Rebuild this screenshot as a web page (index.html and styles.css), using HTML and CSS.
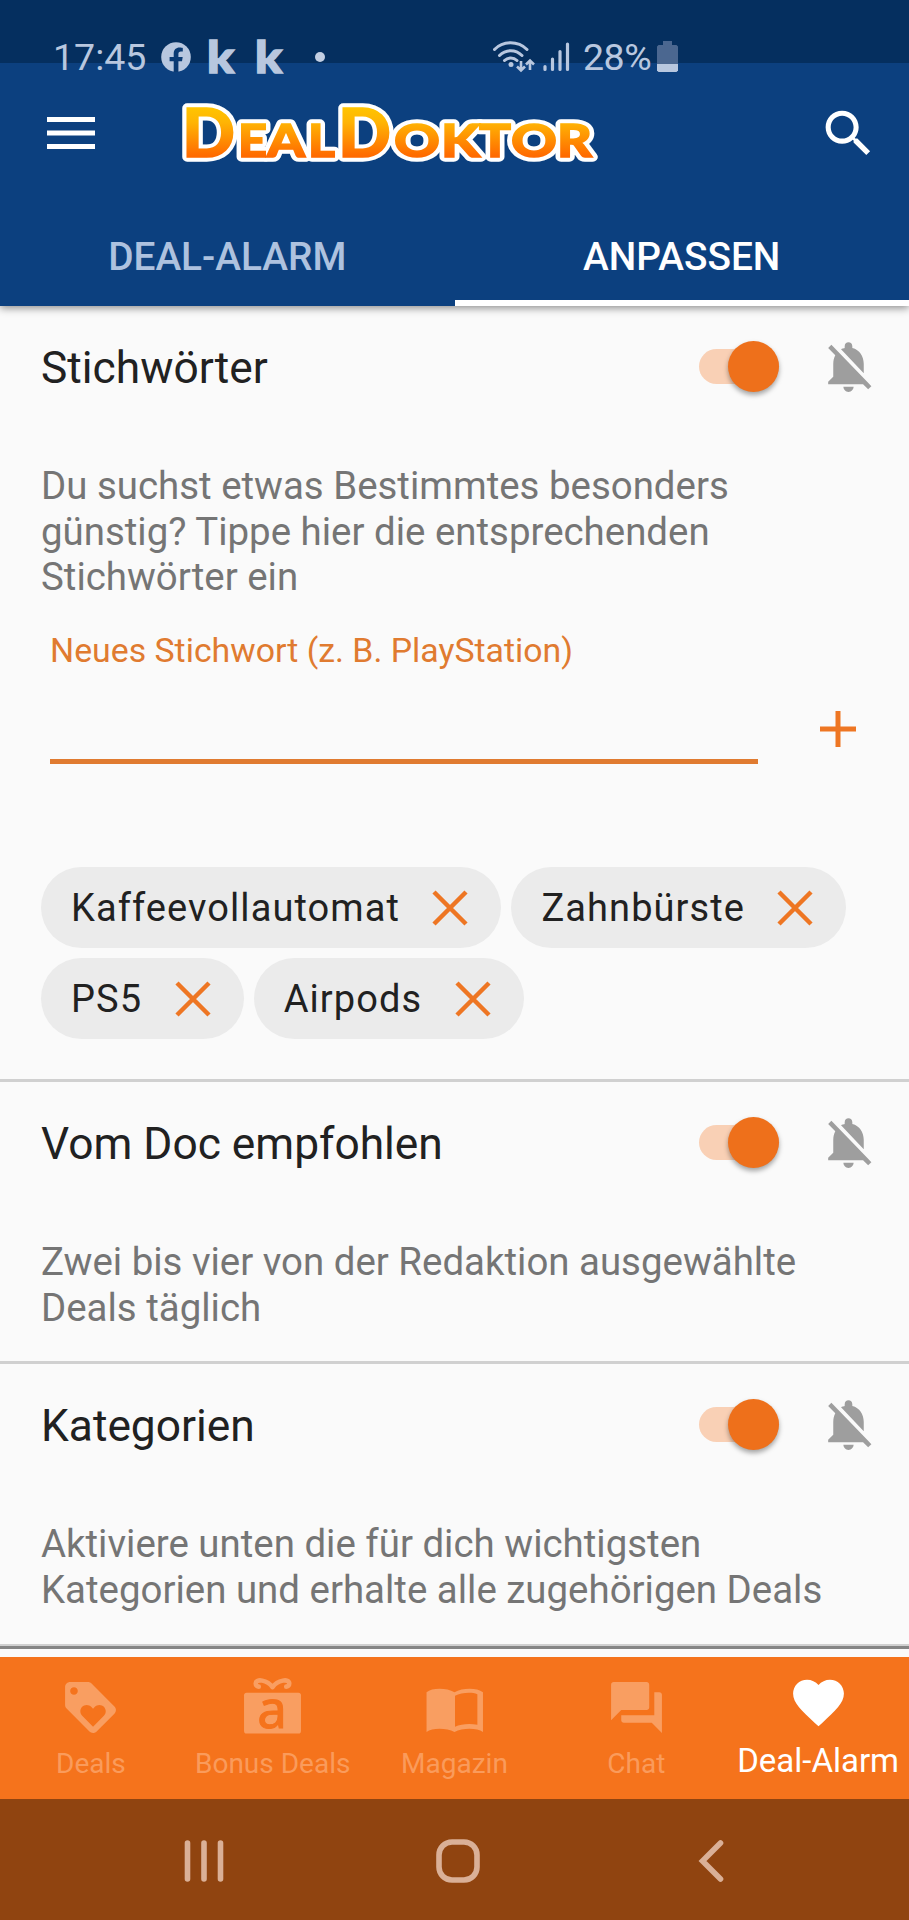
FILE: index.html
```html
<!DOCTYPE html>
<html lang="de">
<head>
<meta charset="utf-8">
<title>DealDoktor – Deal-Alarm</title>
<link rel="stylesheet" href="styles.css">
</head>
<body>
<svg class="defs" width="0" height="0" aria-hidden="true">
  <symbol id="bell-off" viewBox="0 0 24 24"><path d="M20 18.69L7.84 6.14 5.27 3.49 4 4.76l2.8 2.8v.01c-.52.99-.8 2.16-.8 3.42v5l-2 2v1h13.73l2 2L21 19.73l-1-1.04zM12 22c1.11 0 2-.89 2-2h-4c0 1.11.89 2 2 2zm6-7.32V11c0-3.08-1.64-5.64-4.5-6.32V4c0-.83-.67-1.5-1.5-1.5s-1.5.67-1.5 1.5v.68c-.15.03-.29.08-.42.12-.1.03-.2.07-.3.11h-.01c-.01 0-.01 0-.02.01-.23.09-.46.2-.68.31 0 0-.01 0-.01.01L18 14.68z"/></symbol>
  <symbol id="cross" viewBox="0 0 36 36"><path d="M2 2L34 34M34 2L2 34"/></symbol>
</svg>
<div class="screen">
  <header class="top">
    <div class="status">
      <span class="clock">17:45</span>
      <svg class="fb" viewBox="0 0 30 30"><circle cx="15" cy="15" r="14.8"/><path d="M12.7 30V19.2H8.6V15h4.1v-3.2c0-4 2.3-6.2 5.9-6.2 1.200 0 2.600.2 3.200.4v3.600h-1.900c-1.900 0-2.500 1.100-2.500 2.400V15h4.300l-.7 4.200h-3.600V30z"/></svg>
      <span class="k">k</span><span class="k k-second">k</span>
      <span class="dot"></span>
      <svg class="wifi" viewBox="0 0 42 32"><g fill="none" stroke-width="3"><path d="M1.500 8.500C10-.5 25-.5 34 8.500M6.500 14.500c6.500-6.500 16-6.500 22.500 0M11.500 19.500c3.500-3.500 9-3.500 12.500 0" stroke-linecap="round"/><path d="M28 20v9M24 25.500l4 4 4-4M37 29v-9M33 23.500l4-4 4 4" stroke-width="2.600"/></g><circle cx="18" cy="23.500" r="2.500"/></svg>
      <svg class="signal" viewBox="0 0 28 30"><path d="M2 27.500v-3M9.500 27.500V17M17 27.500V9.500M24.500 27.500V2" stroke-width="3.200" stroke-linecap="round"/></svg>
      <span class="percent">28%</span>
      <svg class="battery" viewBox="0 0 21 31"><path class="battery-shell" d="M6 0h9v4h4.500l1.500 1.500V23H0V5.500L1.500 4H6z"/><path d="M0 23h21v6.500L19.500 31h-18L0 29.500z"/></svg>
    </div>
    <div class="appbar">
      <svg class="menu" viewBox="0 0 48 32"><path d="M0 0h48v5H0zM0 13.500h48v5H0zM0 27h48v5H0z"/></svg>
      <svg class="logo" viewBox="0 0 420 66">
        <defs>
          <linearGradient id="gold" gradientUnits="userSpaceOnUse" x1="0" y1="8" x2="0" y2="56"><stop offset="0" stop-color="#ffc400"/><stop offset=".3" stop-color="#ffb404"/><stop offset="1" stop-color="#ff6a00"/></linearGradient>
          <g id="word">
            <text class="cap" x="1" y="57" textLength="53" lengthAdjust="spacingAndGlyphs">D</text>
            <text class="small" x="57" y="57" textLength="29" lengthAdjust="spacingAndGlyphs">E</text>
            <text class="small" x="86" y="57" textLength="38" lengthAdjust="spacingAndGlyphs">A</text>
            <text class="small" x="127" y="57" textLength="27" lengthAdjust="spacingAndGlyphs">L</text>
            <text class="cap" x="157" y="57" textLength="53" lengthAdjust="spacingAndGlyphs">D</text>
            <text class="small" x="213" y="57" textLength="46" lengthAdjust="spacingAndGlyphs">O</text>
            <text class="small" x="260" y="57" textLength="39" lengthAdjust="spacingAndGlyphs">K</text>
            <text class="small" x="298" y="57" textLength="32" lengthAdjust="spacingAndGlyphs">T</text>
            <text class="small" x="330" y="57" textLength="46" lengthAdjust="spacingAndGlyphs">O</text>
            <text class="small" x="376" y="57" textLength="35" lengthAdjust="spacingAndGlyphs">R</text>
          </g>
        </defs>
        <use class="outline" href="#word"/>
        <use class="face" href="#word"/>
      </svg>
      <svg class="search" viewBox="0 0 24 24"><path d="M15.500 14h-.79l-.28-.27C15.410 12.590 16 11.110 16 9.500 16 5.910 13.090 3 9.500 3S3 5.910 3 9.500 5.910 16 9.500 16c1.610 0 3.090-.59 4.230-1.570l.27.28v.79l5 4.990L20.490 19l-4.990-5zm-6 0C7.010 14 5 11.990 5 9.500S7.010 5 9.500 5 14 7.010 14 9.500 11.990 14 9.500 14z"/></svg>
    </div>
    <nav class="tabs">
      <div class="tab">DEAL-ALARM</div>
      <div class="tab tab-active">ANPASSEN</div>
    </nav>
  </header>

  <main class="content">
    <section class="section section-keywords">
      <div class="head"><h2>Stichwörter</h2><span class="switch"><i></i></span><svg class="bell"><use href="#bell-off"/></svg></div>
      <p class="desc">Du suchst etwas Bestimmtes besonders<br>günstig? Tippe hier die entsprechenden<br>Stichwörter ein</p>
      <div class="entry">
        <div class="field"><span class="label">Neues Stichwort (z. B. PlayStation)</span></div>
        <svg class="plus" viewBox="0 0 36 36"><path d="M18 0v36M0 18h36"/></svg>
      </div>
      <div class="chips">
        <span class="chip">Kaffeevollautomat<svg><use href="#cross"/></svg></span>
        <span class="chip">Zahnbürste<svg><use href="#cross"/></svg></span>
        <span class="chip">PS5<svg><use href="#cross"/></svg></span>
        <span class="chip">Airpods<svg><use href="#cross"/></svg></span>
      </div>
    </section>
    <section class="section">
      <div class="head"><h2>Vom Doc empfohlen</h2><span class="switch"><i></i></span><svg class="bell"><use href="#bell-off"/></svg></div>
      <p class="desc">Zwei bis vier von der Redaktion ausgewählte<br>Deals täglich</p>
    </section>
    <section class="section section-last">
      <div class="head"><h2>Kategorien</h2><span class="switch"><i></i></span><svg class="bell"><use href="#bell-off"/></svg></div>
      <p class="desc">Aktiviere unten die für dich wichtigsten<br>Kategorien und erhalte alle zugehörigen Deals</p>
    </section>
  </main>

  <nav class="bottom">
    <div class="item">
      <svg viewBox="0 0 24 24"><path d="M21.410 11.580l-9-9C12.050 2.220 11.550 2 11 2H4c-1.100 0-2 .9-2 2v7c0 .55.22 1.050.59 1.420l9 9c.36.36.86.58 1.410.58.55 0 1.050-.22 1.410-.59l7-7c.37-.36.59-.86.59-1.410 0-.55-.23-1.060-.59-1.420zM5.500 7C4.670 7 4 6.330 4 5.500S4.670 4 5.500 4 7 4.670 7 5.500 6.330 7 5.500 7zm11.770 8.270L13 19.540l-4.270-4.270C8.280 14.810 8 14.190 8 13.500c0-1.380 1.120-2.500 2.500-2.500.69 0 1.320.28 1.770.74l.73.72.73-.73c.45-.45 1.080-.73 1.770-.73 1.380 0 2.500 1.120 2.500 2.500 0 .69-.28 1.320-.73 1.770z"/></svg>
      <span>Deals</span>
    </div>
    <div class="item">
      <svg viewBox="0 0 60 60"><rect x="2" y="15.500" width="56" height="40" rx="2.500"/><path class="bow" d="M30 10C25 3 13.500 1 13.500 6.500c0 2 1.500 3 3 3M30 10C35 3 46.500 1 46.500 6.500c0 2-1.500 3-3 3"/><text x="29.500" y="50" text-anchor="middle">a</text></svg>
      <span>Bonus Deals</span>
    </div>
    <div class="item">
      <svg viewBox="0 0 60 60"><path fill-rule="evenodd" d="M2.500 15C8 10.500 22 10.500 30 15 38 10.500 52 10.500 58 15v39C52 50 38 50 30 54 22 50 8 50 2.500 54zM30.500 18.500V49c6-3 15-3.500 22-2V17c-6-2.500-16-1.500-22 1.500z"/></svg>
      <span>Magazin</span>
    </div>
    <div class="item">
      <svg viewBox="0 0 24 24"><path d="M21 6h-2v9H6v2c0 .55.45 1 1 1h11l4 4V7c0-.55-.45-1-1-1zm-4 6V3c0-.55-.45-1-1-1H3c-.55 0-1 .45-1 1v14l4-4h10c.55 0 1-.45 1-1z"/></svg>
      <span>Chat</span>
    </div>
    <div class="item item-active">
      <svg viewBox="0 0 24 24"><path d="M12 21.350l-1.450-1.320C5.400 15.360 2 12.280 2 8.500 2 5.420 4.420 3 7.500 3c1.740 0 3.410.81 4.500 2.090C13.090 3.810 14.760 3 16.500 3 19.580 3 22 5.420 22 8.500c0 3.780-3.400 6.860-8.550 11.540L12 21.350z"/></svg>
      <span>Deal-Alarm</span>
    </div>
  </nav>

  <div class="system">
    <svg class="recents" viewBox="0 0 40 42"><path d="M3.500 3v36M20 3v36M36.500 3v36"/></svg>
    <svg class="home" viewBox="0 0 44 44"><rect x="3" y="3" width="38" height="38" rx="13"/></svg>
    <svg class="back" viewBox="0 0 26 42"><path d="M22.500 3L4.500 21l18 18"/></svg>
  </div>
</div>
</body>
</html>
```

FILE: styles.css
```css
* { box-sizing: border-box; }
body { margin: 0; font-family: Roboto, "Liberation Sans", sans-serif; }
svg { display: block; flex: none; }
.defs { position: absolute; }

.screen {
  width: 909px;
  height: 1920px;
  display: flex;
  flex-direction: column;
  overflow: hidden;
  background: #fafafa;
}

/* header */
.top {
  height: 306px;
  flex: none;
  display: flex;
  flex-direction: column;
  background: linear-gradient(#052f5f 63px, #0c407f 63px);
  box-shadow: 0 2px 8px rgba(0, 0, 0, .45);
  z-index: 1;
}
.status {
  height: 85px;
  padding: 28px 0 0 53px;
  display: flex;
  align-items: center;
  color: #b8c7df;
  fill: #b8c7df;
  stroke: none;
  font-size: 37.500px;
  line-height: 43px;
}
.clock { width: 108px; margin-top: 2px; }
.fb { width: 30px; height: 30px; }
.fb path { fill: #0a3a73; }
.k {
  width: 48px;
  margin-left: 16px;
  font-family: Lato, sans-serif;
  font-weight: 900;
  font-size: 43px;
  -webkit-text-stroke: 1.500px #b8c7df;
  transform: scaleX(1.16);
  transform-origin: 0 50%;
}
.k-second { margin-left: 0; }
.dot {
  width: 10px;
  height: 10px;
  margin-left: 12px;
  border-radius: 50%;
  background: #c3cfe3;
}
.wifi { width: 42px; height: 32px; margin-left: 168px; stroke: #b8c7df; }
.wifi circle { stroke: none; }
.signal { width: 28px; height: 30px; margin-left: 8px; stroke: #b8c7df; }
.percent { width: 70px; margin: 2px 0 0 12px; letter-spacing: -.5px; }
.battery { width: 21px; height: 31px; margin-left: 4px; }
.battery-shell { fill: #4b6790; }

.appbar {
  height: 120px;
  display: flex;
  align-items: flex-start;
  padding: 15px 30px 0 47px;
  fill: #fff;
}
.menu { width: 48px; height: 32px; margin-top: 17px; }
.logo { width: 420px; height: 66px; margin-left: 86px; overflow: visible; }
.logo text { font-family: Lato, sans-serif; font-weight: 900; }
.cap { font-size: 66px; }
.small { font-size: 46px; }
.outline { fill: #fff; stroke: #fff; stroke-width: 9.500px; stroke-linejoin: round; }
.face { fill: url(#gold); stroke: url(#gold); stroke-width: 1.500px; }
.search { width: 61px; height: 61px; margin-left: auto; margin-top: 3px; }

.tabs { flex: 1; display: flex; }
.tab {
  flex: 1;
  padding-top: 31px;
  text-align: center;
  font-size: 38.800px;
  line-height: 42px;
  font-weight: 500;
  color: #aec2df;
}
.tab-active { color: #fff; border-bottom: 6px solid #fff; }

/* settings sections */
.content { flex: 1; min-height: 0; }
.section { padding: 0 0 31px 41px; border-bottom: 3px solid #d0d0d0; }
.section-keywords { padding-bottom: 40px; }
.head { display: flex; align-items: center; height: 122px; padding: 0 30px 1px 0; }
h2 { flex: 1; margin: 2px 0 0; font-weight: 400; font-size: 44.300px; color: #212121; }
.switch {
  width: 80px;
  height: 35px;
  border-radius: 18px;
  background: #f9d0b5;
  display: flex;
  align-items: center;
  justify-content: flex-end;
}
.switch i {
  width: 51px;
  height: 51px;
  border-radius: 50%;
  background: #ee701b;
  box-shadow: 0 3px 5px rgba(0, 0, 0, .35);
}
.bell { width: 61px; height: 61px; margin-left: 39px; fill: #9e9e9e; }
.desc { margin: 35px 0 0; font-size: 38.430px; line-height: 45.500px; color: #757575; white-space: nowrap; }
.entry { display: flex; margin-top: 28px; height: 136px; }
.field { width: 708px; margin-left: 9px; border-bottom: 5px solid #e07b30; }
.label { display: block; font-size: 33.850px; line-height: 45px; color: #e07b30; }
.plus { width: 36px; height: 36px; margin: 83px 0 0 62px; stroke: #ee7623; stroke-width: 5px; }
.chips { display: flex; flex-wrap: wrap; gap: 10px; margin-top: 103.500px; }
.chip {
  display: flex;
  align-items: center;
  height: 81px;
  padding: 0 33px 0 30px;
  border-radius: 41px;
  background: #ebebeb;
  color: #212121;
  font-size: 38px;
  letter-spacing: 1.080px;
}
.chip svg { width: 36px; height: 36px; margin-left: 32.500px; stroke: #ee7623; stroke-width: 4.500px; }
.section-last {
  padding-bottom: 34px;
  border-bottom: 3px solid #858585;
  box-shadow: inset 0 -2px #d0d0d0;
}

/* bottom navigation */
.bottom { flex: none; height: 142px; display: flex; background: #f5731c; }
.item {
  flex: 1;
  display: flex;
  flex-direction: column;
  align-items: center;
  padding-top: 20px;
  fill: #f99e61;
  color: #fa9b5b;
  font-size: 28px;
  line-height: 34px;
  white-space: nowrap;
}
.item svg { width: 61px; height: 61px; overflow: visible; }
.item span { margin-top: 9px; }
.item text {
  font-family: "Noto Sans", sans-serif;
  font-size: 52px;
  fill: #f5731c;
  stroke: #f5731c;
  stroke-width: 1px;
}
.bow { fill: none; stroke: #f99e61; stroke-width: 4.500px; stroke-linecap: round; }
.item-active { padding-top: 15px; fill: #fff; color: #fff; font-size: 33px; }
.item-active span { margin-top: 11px; }

/* system navigation */
.system {
  flex: none;
  height: 121px;
  display: flex;
  align-items: center;
  padding: 2px 0 0 184px;
  background: #904410;
  fill: none;
  stroke: #dab097;
  stroke-width: 5.600px;
  stroke-linecap: round;
}
.recents { width: 40px; height: 42px; }
.home { width: 44px; height: 44px; margin-left: 212px; }
.back { width: 26px; height: 42px; margin-left: 218px; }
```
